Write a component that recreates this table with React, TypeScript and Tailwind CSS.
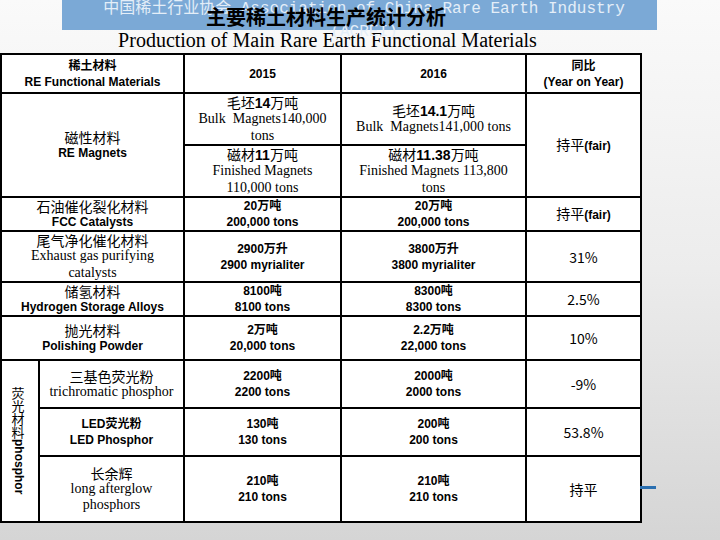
import React from "react";

const cjk = "font-['Noto_Sans_CJK_SC',sans-serif]";
const serif = "font-['Liberation_Serif','Noto_Sans_CJK_SC',serif]";
const sansB = "font-['Liberation_Sans','Noto_Sans_CJK_SC',sans-serif] font-bold";

function Zh({ children }: { children: React.ReactNode }) {
  return <div className={`${cjk} text-[14px] leading-[16px]`}>{children}</div>;
}

function En({ children }: { children: React.ReactNode }) {
  return <div className={`${serif} text-[14px] leading-[16.5px]`}>{children}</div>;
}

function Bold({ children }: { children: React.ReactNode }) {
  return <div className={`${sansB} text-[12px] leading-[16px]`}>{children}</div>;
}

function Num({ zh, en }: { zh: string; en: string }) {
  return (
    <>
      <Bold>{zh}</Bold>
      <Bold>{en}</Bold>
    </>
  );
}

const td = "border-2 border-black bg-white text-center align-middle px-1.5 text-black";
const inlineB = "font-['Liberation_Sans',sans-serif] font-bold";

export default function App() {
  return (
    <div className="relative h-[540px] w-[720px] overflow-hidden bg-gradient-to-b from-[#fafafa] via-[#ececec] to-[#d5d5d5]">
      {/* banner */}
      <div className="absolute left-[62px] top-0 h-[30px] w-[595px] bg-[#7ba9d6]" />
      <div className="absolute left-[4px] top-[-2px] w-[720px] text-center font-['Liberation_Mono','Noto_Sans_CJK_SC',monospace] text-[16px] leading-[23px] text-[#e4eef8]">
        <div>中国稀土行业协会 Association of China Rare Earth Industry</div>
        <div>(ACREI)</div>
      </div>
      <div className="absolute left-0 top-[5px] w-[652px] text-center font-['Noto_Sans_CJK_SC',sans-serif] text-[20px] font-bold leading-[24px] text-black">
        主要稀土材料生产统计分析
      </div>

      <div className="flex flex-col pt-[29px]">
        <div className="w-[655px] text-center font-['Liberation_Serif',serif] text-[20px] leading-[23px] text-black">
          Production of Main Rare Earth Functional Materials
        </div>

        <table className="mt-[1px] w-[640px] table-fixed border-collapse">
          <colgroup>
            <col className="w-[38px]" />
            <col className="w-[145px]" />
            <col className="w-[157px]" />
            <col className="w-[185px]" />
            <col className="w-[115px]" />
          </colgroup>
          <tbody>
            <tr className="h-[39px]">
              <td colSpan={2} className={td}>
                <Bold>稀土材料</Bold>
                <Bold>RE Functional Materials</Bold>
              </td>
              <td className={td}>
                <Bold>2015</Bold>
              </td>
              <td className={td}>
                <Bold>2016</Bold>
              </td>
              <td className={td}>
                <Bold>同比</Bold>
                <Bold>(Year on Year)</Bold>
              </td>
            </tr>
            <tr className="h-[50px]">
              <td colSpan={2} rowSpan={2} className={td}>
                <Zh>磁性材料</Zh>
                <Bold>RE Magnets</Bold>
              </td>
              <td className={td}>
                <Zh>
                  毛坯<b className={inlineB}>14</b>万吨
                </Zh>
                <En>Bulk&nbsp; Magnets140,000 tons</En>
              </td>
              <td className={td}>
                <Zh>
                  毛坯<b className={inlineB}>14.1</b>万吨
                </Zh>
                <En>Bulk&nbsp; Magnets141,000 tons</En>
              </td>
              <td rowSpan={2} className={td}>
                <Zh>
                  持平<b className={`${inlineB} text-[12px]`}>(fair)</b>
                </Zh>
              </td>
            </tr>
            <tr className="h-[52px]">
              <td className={td}>
                <Zh>
                  磁材<b className={inlineB}>11</b>万吨
                </Zh>
                <En>Finished Magnets 110,000 tons</En>
              </td>
              <td className={td}>
                <Zh>
                  磁材<b className={inlineB}>11.38</b>万吨
                </Zh>
                <En>Finished Magnets 113,800 tons</En>
              </td>
            </tr>
            <tr className="h-[32px]">
              <td colSpan={2} className={td}>
                <Zh>石油催化裂化材料</Zh>
                <Bold>FCC Catalysts</Bold>
              </td>
              <td className={td}>
                <Num zh="20万吨" en="200,000 tons" />
              </td>
              <td className={td}>
                <Num zh="20万吨" en="200,000 tons" />
              </td>
              <td className={td}>
                <Zh>
                  持平<b className={`${inlineB} text-[12px]`}>(fair)</b>
                </Zh>
              </td>
            </tr>
            <tr className="h-[51px]">
              <td colSpan={2} className={td}>
                <Zh>尾气净化催化材料</Zh>
                <En>Exhaust gas purifying catalysts</En>
              </td>
              <td className={td}>
                <Num zh="2900万升" en="2900 myrialiter" />
              </td>
              <td className={td}>
                <Num zh="3800万升" en="3800 myrialiter" />
              </td>
              <td className={td}>
                <Zh>31%</Zh>
              </td>
            </tr>
            <tr className="h-[34px]">
              <td colSpan={2} className={td}>
                <Zh>储氢材料</Zh>
                <Bold>Hydrogen Storage Alloys</Bold>
              </td>
              <td className={td}>
                <Num zh="8100吨" en="8100 tons" />
              </td>
              <td className={td}>
                <Num zh="8300吨" en="8300 tons" />
              </td>
              <td className={td}>
                <Zh>2.5%</Zh>
              </td>
            </tr>
            <tr className="h-[44px]">
              <td colSpan={2} className={td}>
                <Zh>抛光材料</Zh>
                <Bold>Polishing Powder</Bold>
              </td>
              <td className={td}>
                <Num zh="2万吨" en="20,000 tons" />
              </td>
              <td className={td}>
                <Num zh="2.2万吨" en="22,000 tons" />
              </td>
              <td className={td}>
                <Zh>10%</Zh>
              </td>
            </tr>
            <tr className="h-[48px]">
              <td rowSpan={3} className={`${td} px-0`}>
                <div className="mx-auto flex justify-center [writing-mode:vertical-rl]">
                  <span className={`${cjk} text-[13px]`}>荧光材料</span>
                  <span className={`${sansB} text-[12px]`}>phosphor</span>
                </div>
              </td>
              <td className={td}>
                <Zh>三基色荧光粉</Zh>
                <En>trichromatic phosphor</En>
              </td>
              <td className={td}>
                <Num zh="2200吨" en="2200 tons" />
              </td>
              <td className={td}>
                <Num zh="2000吨" en="2000 tons" />
              </td>
              <td className={td}>
                <Zh>-9%</Zh>
              </td>
            </tr>
            <tr className="h-[48px]">
              <td className={td}>
                <Bold>LED荧光粉</Bold>
                <Bold>LED Phosphor</Bold>
              </td>
              <td className={td}>
                <Num zh="130吨" en="130 tons" />
              </td>
              <td className={td}>
                <Num zh="200吨" en="200 tons" />
              </td>
              <td className={td}>
                <Zh>53.8%</Zh>
              </td>
            </tr>
            <tr className="h-[66px]">
              <td className={td}>
                <Zh>长余辉</Zh>
                <En>long afterglow phosphors</En>
              </td>
              <td className={td}>
                <Num zh="210吨" en="210 tons" />
              </td>
              <td className={td}>
                <Num zh="210吨" en="210 tons" />
              </td>
              <td className={td}>
                <Zh>持平</Zh>
              </td>
            </tr>
          </tbody>
        </table>
      </div>

      {/* small accent mark */}
      <div className="absolute left-[640px] top-[486px] h-[3px] w-[16px] bg-[#2a6fb0]" />
    </div>
  );
}
